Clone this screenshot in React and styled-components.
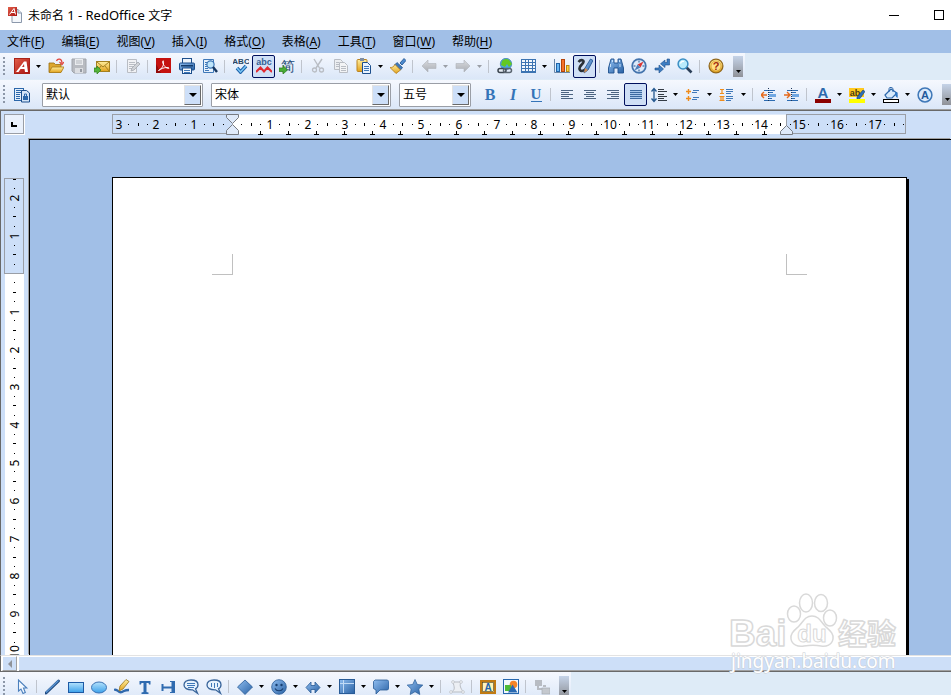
import React from 'react';
import styled, { createGlobalStyle, css } from 'styled-components';

const GlobalStyle = createGlobalStyle`
  * {
    box-sizing: border-box;
  }
  body {
    margin: 0;
    overflow: hidden;
    background: #deebf7;
    color: #000;
    font: 12px/16px "Noto Sans", "Noto Sans CJK SC", sans-serif;
  }
`;

const Window = styled.div`
  position: relative;
  display: flex;
  flex-direction: column;
  height: 100vh;
  overflow: hidden;
`;

const TitleBar = styled.header`
  display: flex;
  align-items: center;
  flex: 0 0 30px;
  gap: 5px;
  padding-left: 7px;
  overflow: hidden;
  background: #fff;
`;

const Title = styled.h1`
  flex: 1;
  margin: 0;
  font-size: 12px;
  font-weight: 400;
  white-space: nowrap;
`;

const Latin = styled.span`
  font-size: 13px;
`;

const WindowControls = styled.div`
  display: flex;
  margin-right: -10px;
`;

const WindowButton = styled.button`
  display: flex;
  align-items: center;
  justify-content: center;
  width: 45px;
  height: 28px;
  padding: 0;
  border: 0;
  background: none;
`;

const MenuBar = styled.nav`
  display: flex;
  align-items: center;
  flex: 0 0 23px;
  gap: 17px;
  padding-left: 7px;
  background: #a1bfe7;
`;

const MenuItem = styled.button`
  padding: 0;
  border: 0;
  background: none;
  color: inherit;
  font: inherit;
  white-space: nowrap;

  u {
    text-underline-offset: 2px;
  }
`;

const barSurface = css`
  background: linear-gradient(#f5f8fe, #dbe7f8);
`;

const BarRow = styled.div`
  display: flex;
  flex: 0 0 ${(p) => p.$height}px;
  overflow: hidden;
  background: #deebf7;
`;

const Toolbar = styled.div`
  display: flex;
  align-items: center;
  flex: ${(p) => (p.$fill ? '1 0 auto' : '0 0 auto')};
  height: ${(p) => p.$height}px;
  padding-left: 3px;
  ${barSurface}
`;

const Grip = styled.span`
  width: 2px;
  height: 19px;
  margin-right: 5px;
  background: repeating-linear-gradient(#8c97a8 0 2px, transparent 2px 4px);
`;

const ToolButton = styled.button`
  display: flex;
  align-items: center;
  justify-content: center;
  flex: none;
  width: 23px;
  height: 23px;
  padding: 0;
  border: 1px solid ${(p) => (p.$pressed ? '#000f5c' : 'transparent')};
  border-radius: 2px;
  background: ${(p) => (p.$pressed ? '#cfdff6' : 'none')};
`;

const DropButton = styled.button`
  display: flex;
  align-items: center;
  justify-content: center;
  flex: none;
  width: 11px;
  height: 23px;
  padding: 0;
  border: 0;
  background: none;
  color: ${(p) => (p.disabled ? '#9a9ea6' : '#000')};
`;

const Separator = styled.span`
  flex: none;
  width: 1px;
  height: 13px;
  margin: 0 4px 0 3px;
  background: #bfc4cd;
`;

const Overflow = styled.button`
  display: flex;
  align-items: flex-end;
  justify-content: center;
  flex: none;
  width: 10px;
  height: 21px;
  margin: 0 2px 0 6px;
  padding: 0 0 4px;
  border: 0;
  background: linear-gradient(#c5d3e8, #8f9298);
`;

const ComboGroup = styled.div`
  display: flex;
  flex: none;
  gap: 8px;
  padding: 0 7px 0 9px;
`;

const Combo = styled.label`
  position: relative;
  flex: none;
  width: ${(p) => p.$width}px;
  height: 24px;
  border: 1px solid #9a9ea6;
  border-radius: 1px;
  background: #fff;
`;

const ComboSelect = styled.select`
  width: 100%;
  height: 100%;
  padding: 0 20px 0 3px;
  border: 0;
  outline: 0;
  appearance: none;
  background: none;
  color: inherit;
  font: inherit;
`;

const ComboFace = styled.span`
  position: absolute;
  top: 1px;
  right: 1px;
  bottom: 1px;
  display: flex;
  align-items: center;
  justify-content: center;
  width: 17px;
  border: 1px solid;
  border-color: #e3e3e3 #696969 #696969 #e3e3e3;
  background: #cddff8;
  pointer-events: none;
`;

const Workspace = styled.main`
  display: grid;
  grid-template-columns: 28px minmax(0, 1fr);
  grid-template-rows: 28px minmax(0, 1fr);
  flex: 1 1 0;
  min-height: 0;
  border-top: 1px solid #696969;
  border-left: 1px solid #696969;
  box-shadow: 0 -1px 0 #a0a0a0;
  background: #cddff8;
`;

const TabKind = styled.button`
  width: 20px;
  height: 20px;
  margin: 3px 0 0 3px;
  padding: 4px;
  border: 1px solid #9a9ea6;
  box-shadow: 1px 1px 0 #fff;
  background: #eaf1fc;
  line-height: 0;
`;

const HorizontalRuler = styled.div`
  padding: 3px 0 0 83px;
  overflow: hidden;
  line-height: 0;
`;

const VerticalRuler = styled.div`
  padding: 39px 0 0 3px;
  overflow: hidden;
  line-height: 0;
`;

const Canvas = styled.section`
  padding: 37px 0 0 82px;
  overflow: hidden;
  border: solid #000;
  border-width: 1px 0 0 1px;
  box-shadow: -1px -1px 0 #a0a0a0;
  background: #a1bfe7;
`;

const Page = styled.article`
  display: flex;
  justify-content: space-between;
  width: 795px;
  height: 1123px;
  padding: 76px 99px;
  border: 1px solid #000;
  box-shadow: 2px 2px 0 #000;
  background: #fff;
`;

const MarginCorner = styled.span`
  width: 21px;
  height: 21px;
  border: solid #c0c0c0;
  border-width: ${(p) => (p.$side === 'left' ? '0 1px 1px 0' : '0 0 1px 1px')};
`;

const ScrollBar = styled.div`
  display: flex;
  flex: 0 0 17px;
  gap: 2px;
  padding-left: 1px;
  border-top: 1px solid #e3e3e3;
  border-bottom: 1px solid #696969;
  border-left: 1px solid #696969;
  box-shadow: 0 1px 0 #e3e3e3;
  background: #fff;
`;

const ScrollButton = styled.button`
  display: flex;
  align-items: center;
  justify-content: center;
  width: 15px;
  padding: 0;
  border: 1px solid;
  border-color: #fff #a0a0a0 #a0a0a0 #fff;
  background: #cddff8;
`;

const ScrollThumb = styled.div`
  flex: 1;
  border-top: 1px solid #fff;
  border-bottom: 1px solid #a0a0a0;
  background: #cddff8;
`;

const Watermark = styled.svg`
  position: absolute;
  right: 45px;
  bottom: 20px;
  pointer-events: none;
`;

const NAVY = '#1d4f8c';
const MID = '#3f78b8';
const GREY = '#b9bdc4';

const HiddenSvg = styled.svg`
  position: absolute;
`;

const Defs = () => (
  <HiddenSvg width="0" height="0" aria-hidden="true">
    <defs>
      <linearGradient id="blue" x1="0" y1="0" x2="1" y2="1">
        <stop offset="0" stopColor="#8fbdf0" />
        <stop offset="1" stopColor="#2861a4" />
      </linearGradient>
      <linearGradient id="sky" x1="0" y1="0" x2="0" y2="1">
        <stop offset="0" stopColor="#b5e2fc" />
        <stop offset="1" stopColor="#3aa0ea" />
      </linearGradient>
      <linearGradient id="gold" x1="0" y1="0" x2="0" y2="1">
        <stop offset="0" stopColor="#ffee9e" />
        <stop offset="1" stopColor="#e2a21c" />
      </linearGradient>
      <linearGradient id="red" x1="0" y1="0" x2="1" y2="1">
        <stop offset="0" stopColor="#e2604a" />
        <stop offset="1" stopColor="#a81010" />
      </linearGradient>
      <linearGradient id="grey" x1="0" y1="0" x2="0" y2="1">
        <stop offset="0" stopColor="#d9dbdf" />
        <stop offset="1" stopColor="#a9adb4" />
      </linearGradient>
    </defs>
  </HiddenSvg>
);

const lines = (rows, color = NAVY) =>
  rows.map(([x, y, w]) => <rect key={`${x}-${y}`} x={x} y={y} width={w} height="1" fill={color} />);

const alignRows = {
  left: [[2, 3, 12], [2, 5, 8], [2, 7, 12], [2, 9, 8], [2, 11, 12]],
  center: [[2, 3, 12], [4, 5, 8], [2, 7, 12], [4, 9, 8], [2, 11, 12]],
  right: [[2, 3, 12], [6, 5, 8], [2, 7, 12], [6, 9, 8], [2, 11, 12]],
};

const icons = {
  app: (
    <>
      <path d="M5 2.500h6l3.500 3.500v9.500h-9.500z" fill="#f4f7fb" stroke="#8b98ab" />
      <path d="M11 2.500v3.500h3.500" fill="#dbe3ee" stroke="#8b98ab" />
      <rect x="1" y="0" width="9" height="9" fill="url(#red)" />
      <path d="M2.500 7.500l4.500-6 1.500 6M4 5.500h4" fill="none" stroke="#fff" />
    </>
  ),
  newDoc: (
    <>
      <rect x=".5" y=".5" width="15" height="15" fill="url(#red)" stroke="#a92319" />
      <path d="M2 14l8-10.500h2.500L14 14h-3l-.5-3H6.500l-2 3zM8 9h2.300l-.3-3z" fill="#fff" fillRule="evenodd" />
    </>
  ),
  open: (
    <>
      <path d="M1 14V5h5l1.500 1.500H13V14z" fill="#dda730" stroke="#9a6d10" strokeWidth=".8" />
      <path d="M1 14.500L4 9h12l-3 5.500z" fill="url(#gold)" stroke="#a87813" strokeWidth=".8" />
      <path d="M8.500 3c1-3 5.500-2.500 5.500 2M11.500 4l2.500 2.500L16 4" fill="none" stroke="#e0453c" strokeWidth="1.200" />
    </>
  ),
  save: (
    <>
      <path d="M1 1h14v14H3l-2-2z" fill="#b8bbc1" stroke="#a0a4ab" />
      <rect x="4" y="1" width="8" height="6" fill="#e9ebee" />
      <path d="M5 3h6M5 5h6" stroke="#b3b7bd" />
      <rect x="4" y="10" width="8" height="5" fill="#dcdee2" />
      <rect x="9" y="11" width="2" height="3" fill="#969ba3" />
    </>
  ),
  mail: (
    <>
      <rect x="2.500" y="3.500" width="13" height="10" fill="url(#gold)" stroke="#a4801f" />
      <path d="M3 4l6 5 6-5M3 13l4-5M15 13l-4-5" fill="none" stroke="#a4801f" />
      <path d="M0 10h3v-2l4 4-4 4v-2H0z" fill="#54b33a" stroke="#2f7f1e" strokeWidth=".7" />
    </>
  ),
  edit: (
    <>
      <path d="M2.500 1.500h9v13h-9z" fill="#f0f1f4" stroke={GREY} />
      {lines([[4, 4, 6], [4, 6, 6], [4, 8, 5], [4, 10, 3]], GREY)}
      <path d="M6 13l1-3 6-6 2 2-6 6z" fill="#cfd2d7" stroke="#a2a7af" strokeWidth=".8" />
    </>
  ),
  pdf: (
    <>
      <rect x="0" y="0" width="15" height="15" fill="#c5120f" />
      <path d="M0 15V6l5 9z" fill="#920a08" />
      <path d="M2.500 12.500C6 11 8 7 7.500 3.500c-.4-2-1.700 0 0 3 1.500 3 4.500 4.500 5.500 3.700S8 8.500 2.500 12.500z" fill="none" stroke="#fff" />
    </>
  ),
  print: (
    <>
      <rect x="3.500" y=".5" width="9" height="5" fill="#eef4fc" stroke={NAVY} />
      <rect x=".5" y="5" width="15" height="7" rx="1" fill="url(#blue)" stroke={NAVY} />
      <rect x="2" y="7" width="12" height="1.500" fill="#133a6b" />
      <rect x="3.500" y="10" width="9" height="5.500" fill="#f6f9fd" stroke={NAVY} />
      {lines([[5, 12, 6], [5, 14, 6]], MID)}
    </>
  ),
  preview: (
    <>
      <path d="M1.500 1.500h10v13h-10z" fill="#e7f1fc" stroke={MID} />
      {lines([[3, 4, 3], [3, 6, 2], [3, 8, 2], [3, 10, 3], [3, 12, 4]], MID)}
      <circle cx="8.500" cy="6.500" r="3.600" fill="#bfe5fa" stroke={MID} strokeWidth="1.200" />
      <path d="M11 9l4 5" stroke="#16365f" strokeWidth="2.400" />
    </>
  ),
  spell: (
    <>
      <text x="8" y="6" fontSize="8" fontWeight="700" textAnchor="middle" fill="#274664">ABC</text>
      <path d="M4 10l3.500 4L13 8" fill="none" stroke="#1e62ab" strokeWidth="3.500" />
      <path d="M4 10l3.500 4L13 8" fill="none" stroke="#7cc8f6" strokeWidth="1.500" />
    </>
  ),
  autoSpell: (
    <>
      <text x="8" y="7" fontSize="9" fontWeight="700" textAnchor="middle" fill="#345f94">abc</text>
      <path d="M0 14l4.500-4.500 3.500 4 3.500-4L16 14" fill="none" stroke="#e12a32" strokeWidth="2" />
    </>
  ),
  convert: (
    <>
      <text x="8.500" y="13" fontSize="14" fontWeight="500" textAnchor="middle" fill="#244b78">简</text>
      <path d="M0 10h4V7.500L8.500 12 4 16v-2.500H0z" fill="#4aad36" stroke="#28791c" strokeWidth=".7" />
    </>
  ),
  cut: (
    <>
      <path d="M4 1l5.500 9M12 1L6 10" stroke={GREY} strokeWidth="1.400" />
      <circle cx="4.500" cy="12" r="2" fill="none" stroke={GREY} strokeWidth="1.300" />
      <circle cx="11.500" cy="12" r="2" fill="none" stroke={GREY} strokeWidth="1.300" />
    </>
  ),
  copy: (
    <>
      <path d="M1.500 1.500h6l2 2v8h-8z" fill="#eceef1" stroke={GREY} />
      <path d="M6.500 4.500h5l3 3v7h-8z" fill="#f3f4f6" stroke={GREY} />
      {lines([[3, 4, 3], [3, 6, 3], [3, 8, 3], [8, 8, 5], [8, 10, 5], [8, 12, 5]], GREY)}
    </>
  ),
  paste: (
    <>
      <rect x="1" y="1.500" width="10" height="12" rx="1" fill="url(#gold)" stroke="#bb8421" />
      <rect x="4" y="0" width="4" height="3" fill="#7f8ea3" />
      <path d="M6.500 4.500h5l3 3v8h-8z" fill="#e9f3fe" stroke={NAVY} />
      {lines([[8, 8, 5], [8, 10, 5], [8, 12, 5]], MID)}
    </>
  ),
  brush: (
    <>
      <path d="M10 5l4-4.500 2 2L12 7z" fill="#4d8bd0" stroke={NAVY} strokeWidth=".8" />
      <path d="M7 4.500l5.500 5L10.500 12 4.500 7z" fill={MID} stroke={NAVY} strokeWidth=".7" />
      <path d="M5 6.500L10.500 12 6 15.500 0 9.500c2 .3 4-1 5-3z" fill="url(#gold)" stroke="#b37a17" strokeWidth=".8" />
    </>
  ),
  undo: <path d="M1 8l6-6v3.500h8v5H7V14z" fill="url(#grey)" stroke="#afb3ba" strokeWidth=".6" />,
  redo: <path d="M15 8L9 2v3.500H1v5h8V14z" fill="url(#grey)" stroke="#afb3ba" strokeWidth=".6" />,
  link: (
    <>
      <circle cx="9" cy="6" r="5.700" fill="#4aa6e4" stroke="#2b6ba5" strokeWidth=".6" />
      <path d="M5 3c3-3 7-2 8 0l2 3-3 3-2-3-2 3-4-2z" fill="#63c823" />
      <rect x="1" y="10.500" width="8" height="4" rx="2" fill="#e6ebf2" stroke="#3b454f" strokeWidth="1.500" />
      <rect x="6.500" y="10.500" width="8" height="4" rx="2" fill="none" stroke="#5a6570" strokeWidth="1.500" />
    </>
  ),
  table: (
    <>
      <rect x="1" y="1" width="15" height="14" fill="#3d74b2" />
      {[2, 5, 8, 11].map((y) =>
        [2, 6, 9, 13].map((x) => <rect key={`${x}-${y}`} x={x} y={y} width={x === 2 || x === 9 ? 3 : 2} height="2" fill="#f2f7fd" />)
      )}
    </>
  ),
  chart: (
    <>
      <path d="M.5 1v13.500H16" fill="none" stroke="#6b87a8" />
      <rect x="2.500" y="5.500" width="3" height="8" fill="#69b7f4" stroke="#2164a8" />
      <rect x="7.500" y="1.500" width="3" height="12" fill="#f4722b" stroke="#b64409" />
      <rect x="12.500" y="7.500" width="2.500" height="6" fill="#ffd33e" stroke="#ba8611" />
    </>
  ),
  draw: (
    <>
      <path d="M1.500 4C4 1 8 2 6 5S1 9 3 12s7-2 8-3" fill="none" stroke="#2b3138" strokeWidth="2.600" />
      <path d="M8 10l5.500-9 2.500 1.500L11 12l-4 3z" fill="url(#blue)" stroke={NAVY} strokeWidth=".8" />
      <path d="M8 10l3 2-4 3z" fill="#d28a4a" />
    </>
  ),
  find: (
    <>
      <path d="M3 1h3v4h4V1h3l2.500 9v5h-5.500v-5H6v5H.5v-5z" fill="url(#blue)" stroke={NAVY} strokeWidth=".9" />
      <path d="M2.500 6v3M12 6v3M4.500 2v2M11.500 2v2" stroke="#c8e2fb" />
    </>
  ),
  compass: (
    <>
      <circle cx="8" cy="8" r="6.800" fill="#dceafa" stroke="#4474ad" strokeWidth="1.700" />
      <path d="M8 2.500v2M8 11.500v2M2.500 8h2M11.500 8h2" stroke={NAVY} />
      <path d="M12.500 3.500L9.500 9.500 6.500 6.500z" fill="#da3634" />
      <path d="M3.500 12.500L6.500 6.500l3 3z" fill="#4f7fba" />
    </>
  ),
  nonPrint: (
    <>
      <path d="M13 1h2.500v6H11v2.500L6.500 5.800 11 2v2.500h2z" fill="#3d7dc2" stroke={NAVY} strokeWidth=".6" />
      <path d="M1 10h4V7l4.500 4L5 15v-3H1z" fill="#3d7dc2" stroke={NAVY} strokeWidth=".6" />
    </>
  ),
  zoom: (
    <>
      <path d="M9.500 9.500l5 5" stroke="#2b3f58" strokeWidth="2.600" />
      <circle cx="6" cy="6" r="4.900" fill="#b9ebfc" stroke="#3d8fc4" strokeWidth="1.500" />
      <path d="M3.500 5.500c.5-2 2-2.500 3.500-2" fill="none" stroke="#fff" strokeWidth="1.300" />
    </>
  ),
  help: (
    <>
      <circle cx="8" cy="8" r="6.900" fill="url(#gold)" stroke="#93681d" strokeWidth="1.300" />
      <circle cx="8" cy="8" r="5" fill="#ffdf84" stroke="#d39a2c" strokeWidth=".7" />
      <text x="8" y="12" fontSize="11" fontWeight="700" textAnchor="middle" fill="#a22a0e">?</text>
    </>
  ),
  styles: (
    <>
      <rect x=".5" y="1.500" width="9" height="12" fill="#e4effb" stroke="#2c67aa" />
      {lines([[2, 3, 6], [2, 5, 6], [2, 7, 4], [2, 9, 4], [2, 11, 4]], '#2c67aa')}
      <path d="M7.500 3.500h5l3 2.500v9h-8z" fill="#d5e5f8" stroke={NAVY} />
      <rect x="9" y="9" width="5" height="4" fill="#2c67aa" />
      <path d="M10.500 9V7h2v2" stroke="#2c67aa" fill="none" />
    </>
  ),
  bold: <text x="8" y="13" fontSize="16" fontWeight="700" textAnchor="middle" fill="#3474b8" fontFamily="Liberation Serif, serif">B</text>,
  italic: <text x="8" y="13" fontSize="16" fontWeight="700" fontStyle="italic" textAnchor="middle" fill="#3474b8" fontFamily="Liberation Serif, serif">I</text>,
  underline: (
    <>
      <text x="8" y="12" fontSize="15" fontWeight="700" textAnchor="middle" fill="#3474b8" fontFamily="Liberation Serif, serif">U</text>
      <rect x="3" y="14" width="11" height="1" fill="#3474b8" />
    </>
  ),
  alignLeft: lines(alignRows.left, '#4c6480'),
  alignCenter: lines(alignRows.center, '#4c6480'),
  alignRight: lines(alignRows.right, '#4c6480'),
  justify: (
    <>
      <rect x="2" y="3" width="12" height="9" fill="#a9c8ec" />
      {lines([[2, 3, 12], [2, 5, 12], [2, 7, 12], [2, 9, 12], [2, 11, 12]], '#3c699f')}
    </>
  ),
  spacing: (
    <>
      <path d="M3 2v12M.5 4.500L3 1.500l2.500 3M.5 11.500L3 14.500l2.500-3" fill="none" stroke="#24588f" strokeWidth="1.300" />
      {lines([[7, 2, 6], [7, 4, 9], [7, 7, 6], [7, 9, 9], [7, 11, 6], [7, 13, 9]], '#343c46')}
    </>
  ),
  bullets: (
    <>
      <path d="M1 4.500h5M3.500 2v5M1 11.500h5M3.500 9v5" stroke="#ef8c1b" strokeWidth="1.400" />
      {lines([[8, 3, 6], [7, 5, 5], [8, 10, 6], [7, 12, 5]], MID)}
    </>
  ),
  numbering: (
    <>
      <path d="M1 2.500h4M3 2.500v4M1 6.500h4M.500 9.500h5M2 9.500v4M4 9.500v4M.500 13.500h5" stroke="#ef8c1b" strokeWidth="1.200" />
      {lines([[7, 2, 7], [7, 4, 7], [7, 6, 5], [7, 9, 7], [7, 11, 7], [7, 13, 5]], MID)}
    </>
  ),
  outdent: (
    <>
      <path d="M0 8h6M3 5L0 8l3 3" fill="none" stroke="#e56a1c" strokeWidth="1.400" />
      {lines([[3, 3, 4], [8, 3, 6], [8, 5, 4], [8, 7, 7], [8, 9, 6], [8, 11, 3], [3, 13, 4], [8, 13, 6]], '#2d6cb2')}
      <path d="M7.500 1v14" stroke="#1c3558" strokeDasharray="1 1" />
      <rect x="8" y="7" width="7" height="3" fill="#70a7e2" />
    </>
  ),
  indent: (
    <>
      <path d="M0 8h5.500M3 5l3 3-3 3" fill="none" stroke="#e56a1c" strokeWidth="1.400" />
      {lines([[3, 3, 4], [8, 3, 6], [8, 5, 4], [8, 7, 7], [8, 9, 6], [8, 11, 3], [3, 13, 4], [8, 13, 6]], '#2d6cb2')}
      <path d="M7.500 1v14" stroke="#1c3558" strokeDasharray="1 1" />
      <rect x="8" y="7" width="7" height="3" fill="#70a7e2" />
    </>
  ),
  fontColor: (
    <>
      <text x="8" y="11" fontSize="15" fontWeight="700" textAnchor="middle" fill="#2e69ac">A</text>
      <rect x="0" y="12" width="16" height="4" fill="#8b0000" />
    </>
  ),
  highlight: (
    <>
      <rect x="0" y="1" width="15" height="9" fill="#ffc91f" />
      <text x="6" y="9" fontSize="9" fontWeight="700" textAnchor="middle" fill="#4a3b12">ab</text>
      <path d="M8 10l6-7 2 1.500-5 7-3 .5z" fill="#2d6eb8" stroke="#163e70" strokeWidth=".6" />
      <rect x="0" y="12" width="16" height="4" fill="#ffff00" />
    </>
  ),
  fill: (
    <>
      <path d="M2 8l6-6 6 4-5 5H4z" fill="#d6e9fb" stroke="#2c67aa" strokeWidth="1.200" />
      <path d="M6 5V1.500C6 0 10 0 10 2v3" fill="none" stroke="#2c67aa" />
      <path d="M12 5c3 0 3 3 2.500 6-2-1-2.500-3-2.500-6z" fill="#2f78c6" />
      <rect x=".5" y="12.500" width="15" height="3" fill="#fff" stroke="#000" />
    </>
  ),
  charFormat: (
    <>
      <circle cx="8" cy="8" r="6.900" fill="#dceafa" stroke="#3f78b8" strokeWidth="1.500" />
      <text x="8" y="12" fontSize="11" fontWeight="700" textAnchor="middle" fill="#22599b">A</text>
    </>
  ),
  pointer: <path d="M4.500 1v11l2.500-2 2 4.500 2.300-1L9.500 9h3.300z" fill="#f4f9ff" stroke="#4c80bd" strokeWidth="1.100" />,
  line: (
    <>
      <path d="M1 14L13.500 2" stroke="#204b80" strokeWidth="2.800" strokeLinecap="round" />
      <path d="M1 13.500L13.500 1.500" stroke="#5994d3" strokeWidth="1.300" />
    </>
  ),
  rect: <rect x=".5" y="3.500" width="15" height="10" fill="url(#sky)" stroke="#1d5aa5" />,
  ellipse: <ellipse cx="8" cy="8.500" rx="7.500" ry="5.500" fill="url(#sky)" stroke="#3b73b5" />,
  pencil: (
    <>
      <path d="M0 11c4-2 4 4 8 2s3-2 7-2" fill="none" stroke="#2f68ad" strokeWidth="2.400" />
      <path d="M5 12l1-5 6-6.500 3 2-6 7.500z" fill="url(#gold)" stroke="#98751e" strokeWidth=".8" />
    </>
  ),
  text: <path d="M2.500 2h11v3.500H12L11.500 4h-2v9l2 .5V15h-7v-1.500l2-.5V4h-2L4 5.500H2.500z" fill="#2f6bb0" />,
  verticalText: <path d="M1.500 5h2v2.500h8V3h-1.500V2H15v12h-5v-1h1.500v-3.500h-8V12h-2z" fill="#2f6bb0" />,
  callout: (
    <>
      <path d="M8 1c4.500 0 7 2 7 4.800 0 2-1 3.300-2.500 4l2 4.500-5-3.500C4 11 1 9 1 6s2.500-5 7-5z" fill="#e7f2fd" stroke="#39659b" strokeWidth="1.300" />
      {lines([[4, 4, 8], [4, 6, 8], [5, 8, 6]], MID)}
    </>
  ),
  verticalCallout: (
    <>
      <path d="M8 1c4.500 0 7 2 7 4.800 0 2-1 3.300-2.500 4l2 4.500-5-3.500C4 11 1 9 1 6s2.500-5 7-5z" fill="#e7f2fd" stroke="#39659b" strokeWidth="1.300" />
      <path d="M5.500 4v4M8.500 4v5M11.500 4v4" stroke={MID} />
    </>
  ),
  diamond: <path d="M8 1l7.500 7L8 15.500.500 8z" fill="url(#blue)" stroke="#285b96" strokeWidth=".8" />,
  smile: (
    <>
      <circle cx="8" cy="8" r="7.300" fill="url(#blue)" stroke="#285b96" strokeWidth=".8" />
      <circle cx="5.500" cy="6" r="1.200" fill="#173e70" />
      <circle cx="10.500" cy="6" r="1.200" fill="#173e70" />
      <path d="M4 9.500c1.500 3 6.500 3 8 0" fill="none" stroke="#173e70" strokeWidth="1.200" />
    </>
  ),
  arrows: <path d="M1 8.500L6 3v3.500h4V3l5 5.500L10 14v-3.500H6V14z" fill="url(#blue)" stroke="#285b96" strokeWidth=".8" />,
  flowchart: (
    <>
      <rect x=".5" y=".5" width="15" height="14" fill="url(#blue)" stroke="#285b96" />
      <path d="M4.500 1v13M1 4.500h14" stroke="#c2dbf6" />
    </>
  ),
  bubble: <path d="M2 1h12.500L16 2.500v7L14.500 11H7l-4 4v-4L.500 9.500v-7z" fill="url(#blue)" stroke="#285b96" strokeWidth=".8" />,
  star: <path d="M8 .5l2.300 5 5.500.6-4 3.800 1 5.600L8 12.700l-4.800 2.800 1-5.600-4-3.800 5.500-.6z" fill="url(#blue)" stroke="#285b96" strokeWidth=".7" />,
  points: (
    <>
      <path d="M4 3h8c-2 4 0 6 2 10H2c5-2 3-5 2-10z" fill="#eceff4" stroke={GREY} />
      {[[4, 3], [12, 3], [2, 13], [14, 13]].map(([x, y]) => (
        <circle key={x} cx={x} cy={y} r="1.400" fill="#f3f5f8" stroke={GREY} strokeWidth=".7" />
      ))}
    </>
  ),
  fontWork: (
    <>
      <rect x="1" y="2" width="14" height="12" fill="#fff4b8" stroke="#c07a12" strokeWidth="2" />
      <rect x="2.500" y="3.500" width="11" height="9" fill="none" stroke="#3d2d0e" strokeWidth=".6" />
      <text x="8" y="12" fontSize="10" fontWeight="700" textAnchor="middle" fill="#1e63ad">A</text>
    </>
  ),
  picture: (
    <>
      <rect x=".5" y=".5" width="15" height="14" fill="#f3f8fd" stroke="#2667ae" />
      <circle cx="10.500" cy="5.500" r="3.800" fill="#f38428" />
      <rect x="2" y="6" width="6" height="6" fill="#4dba39" />
      <path d="M9.500 5.500l5 8H5z" fill="#2868b2" />
    </>
  ),
  connector: (
    <>
      <rect x="1" y="1" width="7" height="6" fill="#b8bcc3" />
      <path d="M4 6v4h6M9 7h3" fill="none" stroke="#b8bcc3" strokeWidth="2" />
      <rect x="8" y="9" width="8" height="6" fill="#c4c8ce" stroke="#a6abb3" strokeWidth=".7" />
    </>
  ),
};

const Icon = ({ name }) => (
  <svg width="16" height="16" viewBox="0 0 16 16" aria-hidden="true">
    {icons[name]}
  </svg>
);

const Triangle = () => (
  <svg width="5" height="3" viewBox="0 0 5 3" aria-hidden="true">
    <path d="M0 0h5L2.500 3z" fill="currentColor" />
  </svg>
);

// '|' is a separator
const standardTools = [
  { icon: 'newDoc', label: '新建', drop: true },
  { icon: 'open', label: '打开' },
  { icon: 'save', label: '保存', disabled: true },
  { icon: 'mail', label: '邮件' },
  '|',
  { icon: 'edit', label: '编辑文件', disabled: true },
  '|',
  { icon: 'pdf', label: '导出 PDF' },
  { icon: 'print', label: '打印' },
  { icon: 'preview', label: '打印预览' },
  '|',
  { icon: 'spell', label: '拼写检查' },
  { icon: 'autoSpell', label: '自动拼写检查', pressed: true },
  { icon: 'convert', label: '简繁转换' },
  '|',
  { icon: 'cut', label: '剪切', disabled: true },
  { icon: 'copy', label: '复制', disabled: true },
  { icon: 'paste', label: '粘贴', drop: true },
  { icon: 'brush', label: '格式刷' },
  '|',
  { icon: 'undo', label: '撤销', disabled: true, drop: true },
  { icon: 'redo', label: '恢复', disabled: true, drop: true },
  '|',
  { icon: 'link', label: '超链接' },
  { icon: 'table', label: '表格', drop: true },
  { icon: 'chart', label: '图表' },
  { icon: 'draw', label: '绘图', pressed: true },
  '|',
  { icon: 'find', label: '查找' },
  { icon: 'compass', label: '导航' },
  { icon: 'nonPrint', label: '非打印字符' },
  { icon: 'zoom', label: '显示比例' },
  '|',
  { icon: 'help', label: '帮助' },
];

const formatTools = [
  { icon: 'bold', label: '粗体' },
  { icon: 'italic', label: '斜体' },
  { icon: 'underline', label: '下划线' },
  '|',
  { icon: 'alignLeft', label: '左对齐' },
  { icon: 'alignCenter', label: '居中' },
  { icon: 'alignRight', label: '右对齐' },
  { icon: 'justify', label: '两端对齐', pressed: true },
  { icon: 'spacing', label: '行距', drop: true },
  { icon: 'bullets', label: '项目符号', drop: true },
  { icon: 'numbering', label: '编号', drop: true },
  '|',
  { icon: 'outdent', label: '减少缩进' },
  { icon: 'indent', label: '增加缩进' },
  '|',
  { icon: 'fontColor', label: '字体颜色', drop: true },
  { icon: 'highlight', label: '突出显示', drop: true },
  { icon: 'fill', label: '背景颜色', drop: true },
  { icon: 'charFormat', label: '字符' },
];

const drawTools = [
  { icon: 'pointer', label: '选择' },
  '|',
  { icon: 'line', label: '直线' },
  { icon: 'rect', label: '矩形' },
  { icon: 'ellipse', label: '椭圆' },
  { icon: 'pencil', label: '手绘线' },
  { icon: 'text', label: '文字' },
  { icon: 'verticalText', label: '竖排文字' },
  { icon: 'callout', label: '图例' },
  { icon: 'verticalCallout', label: '竖排图例' },
  '|',
  { icon: 'diamond', label: '基本形状', drop: true },
  { icon: 'smile', label: '符号形状', drop: true },
  { icon: 'arrows', label: '箭头', drop: true },
  { icon: 'flowchart', label: '流程图', drop: true },
  { icon: 'bubble', label: '标注', drop: true },
  { icon: 'star', label: '星形', drop: true },
  '|',
  { icon: 'points', label: '接点', disabled: true },
  '|',
  { icon: 'fontWork', label: '艺术字' },
  { icon: 'picture', label: '图片' },
  '|',
  { icon: 'connector', label: '连接', disabled: true },
];

const menus = [
  ['文件', 'F'],
  ['编辑', 'E'],
  ['视图', 'V'],
  ['插入', 'I'],
  ['格式', 'O'],
  ['表格', 'A'],
  ['工具', 'T'],
  ['窗口', 'W'],
  ['帮助', 'H'],
];

function Tools({ items }) {
  return items.map((item, i) => {
    if (item === '|') return <Separator key={i} />;
    return (
      <React.Fragment key={i}>
        <ToolButton aria-label={item.label} aria-pressed={item.pressed} $pressed={item.pressed} disabled={item.disabled}>
          <Icon name={item.icon} />
        </ToolButton>
        {item.drop && (
          <DropButton aria-label={`${item.label}选项`} disabled={item.disabled}>
            <Triangle />
          </DropButton>
        )}
      </React.Fragment>
    );
  });
}

function ComboBox({ label, value, width }) {
  return (
    <Combo $width={width}>
      <ComboSelect aria-label={label} defaultValue={value}>
        <option>{value}</option>
      </ComboSelect>
      <ComboFace>
        <svg width="8" height="4" viewBox="0 0 8 4" aria-hidden="true">
          <path d="M0 0h8L4 4z" />
        </svg>
      </ComboFace>
    </Combo>
  );
}

const CM = 37.8;

// numbers on whole centimetres, a stroke on the halves and dots on the quarters
function rulerMarks(from, to) {
  const marks = [];
  for (let q = from * 4; q <= to * 4; q++) {
    if (q === 0) continue;
    const kind = q % 4 === 0 ? 'number' : q % 2 === 0 ? 'half' : 'dot';
    marks.push({ q, kind, offset: Math.round((q / 4) * CM) });
  }
  return marks;
}

function RulerAcross() {
  const zero = 120;
  const end = 674;
  return (
    <svg width="795" height="22" viewBox="0 0 795 22" fontSize="12" aria-hidden="true">
      <rect x=".5" y=".5" width="793" height="19" fill="#cddff8" stroke="#9a9ea6" />
      <rect x={zero} y="0" width={end - zero} height="1" fill="#e1ebfa" />
      <rect x={zero} y="1" width={end - zero} height="19" fill="#fff" />
      {rulerMarks(-3, 17.75).map(({ q, kind, offset }) => {
        const x = zero + offset;
        if (kind === 'number') {
          return <text key={q} x={x} y="15" textAnchor="middle">{Math.abs(q / 4)}</text>;
        }
        return <rect key={q} x={x} y={kind === 'half' ? 9 : 10} width="1" height={kind === 'half' ? 3 : 1} />;
      })}
      {Array.from({ length: 19 }, (_, i) => (
        <path key={i} d={`M${148 + i * 28} 17h1v3h2v1h-5v-1h2z`} />
      ))}
      <rect x={end} y="0" width="1" height="14" fill="#9a9ea6" />
      <g fill="#dfeafa" stroke="#777b82">
        <path d="M114.500.500h12v3l-6 6-6-6z" />
        <path d="M114.500 20.500h12v-4l-6-6-6 6z" />
        <path d="M668.500 20.500h12v-3l-6-6-6 6z" />
      </g>
    </svg>
  );
}

function RulerDown() {
  const zero = 95;
  return (
    <svg width="20" height="1123" viewBox="0 0 20 1123" fontSize="12" aria-hidden="true">
      <rect x="1" y={zero} width="19" height="1028" fill="#fff" />
      <rect x=".5" y=".5" width="19" height="95" fill="#cddff8" stroke="#9a9ea6" />
      {rulerMarks(-2.5, 25).map(({ q, kind, offset }) => {
        const y = zero + offset;
        if (kind === 'number') {
          return (
            <text key={q} transform={`translate(15 ${y + 1}) rotate(-90)`} textAnchor="middle">
              {Math.abs(q / 4)}
            </text>
          );
        }
        return <rect key={q} x={kind === 'half' ? 9 : 10} y={y} width={kind === 'half' ? 3 : 1} height="1" />;
      })}
    </svg>
  );
}

function App() {
  return (
    <Window>
      <GlobalStyle />
      <Defs />
      <TitleBar>
        <Icon name="app" />
        <Title>
          未命名 <Latin>1 - RedOffice </Latin>文字
        </Title>
        <WindowControls>
          <WindowButton aria-label="最小化">
            <svg width="10" height="10" aria-hidden="true">
              <rect y="5" width="10" height="1" />
            </svg>
          </WindowButton>
          <WindowButton aria-label="最大化">
            <svg width="10" height="10" aria-hidden="true">
              <rect x=".5" y=".5" width="9" height="9" fill="none" stroke="#000" />
            </svg>
          </WindowButton>
        </WindowControls>
      </TitleBar>

      <MenuBar>
        {menus.map(([name, key]) => (
          <MenuItem key={key}>
            {name}(<u>{key}</u>)
          </MenuItem>
        ))}
      </MenuBar>

      <BarRow $height={27}>
        <Toolbar $height={26}>
          <Grip />
          <Tools items={standardTools} />
          <Overflow aria-label="更多">
            <Triangle />
          </Overflow>
        </Toolbar>
      </BarRow>

      <BarRow $height={30}>
        <Toolbar $height={29} $fill>
          <Grip />
          <ToolButton aria-label="样式和格式">
            <Icon name="styles" />
          </ToolButton>
          <ComboGroup>
            <ComboBox label="样式" value="默认" width={161} />
            <ComboBox label="字体" value="宋体" width={180} />
            <ComboBox label="字号" value="五号" width={72} />
          </ComboGroup>
          <Tools items={formatTools} />
          <Overflow aria-label="更多">
            <Triangle />
          </Overflow>
        </Toolbar>
      </BarRow>

      <Workspace>
        <TabKind aria-label="制表符">
          <svg width="10" height="10" aria-hidden="true">
            <path d="M2 3h2v3h4v2H2z" />
          </svg>
        </TabKind>
        <HorizontalRuler>
          <RulerAcross />
        </HorizontalRuler>
        <VerticalRuler>
          <RulerDown />
        </VerticalRuler>
        <Canvas>
          <Page>
            <MarginCorner $side="left" />
            <MarginCorner $side="right" />
          </Page>
        </Canvas>
      </Workspace>

      <ScrollBar>
        <ScrollButton aria-label="向左滚动">
          <svg width="4" height="8" aria-hidden="true">
            <path d="M4 0v8L0 4z" fill="#8f939a" />
          </svg>
        </ScrollButton>
        <ScrollThumb />
      </ScrollBar>

      <BarRow $height={23}>
        <Toolbar $height={29}>
          <Grip />
          <Tools items={drawTools} />
          <Overflow aria-label="更多">
            <Triangle />
          </Overflow>
        </Toolbar>
      </BarRow>

      <Watermark width="180" height="90" viewBox="0 0 180 90" aria-hidden="true">
        <g fill="#fff" stroke="#d9d9d9" strokeWidth="1.500" strokeLinejoin="round">
          <ellipse cx="68" cy="29" rx="6.500" ry="8" />
          <ellipse cx="80" cy="18" rx="6.500" ry="9" />
          <ellipse cx="95" cy="18" rx="6.500" ry="8.500" />
          <ellipse cx="104" cy="33" rx="6.500" ry="8" />
          <path d="M86 31c7 0 9 6 13 10s9 7 8 13-7 8-12 7-11-1-17 0-12-1-13-7 4-9 8-13 6-10 13-10z" />
          <text x="3" y="61" fontSize="37" fontWeight="700" fontFamily="Liberation Sans, sans-serif">Bai</text>
          <text x="86" y="57" fontSize="24" fontWeight="700" strokeWidth="1" textAnchor="middle" fontFamily="Liberation Sans, sans-serif">du</text>
          <text x="112" y="60" fontSize="29" fontWeight="700" fontFamily="Noto Sans CJK SC, sans-serif">经验</text>
        </g>
        <text x="5" y="83" fontSize="19" fill="#fff" stroke="#c9ccd2" strokeWidth="1" paintOrder="stroke" fontFamily="Noto Sans, sans-serif">
          jingyan.baidu.com
        </text>
      </Watermark>
    </Window>
  );
}

export default App;
